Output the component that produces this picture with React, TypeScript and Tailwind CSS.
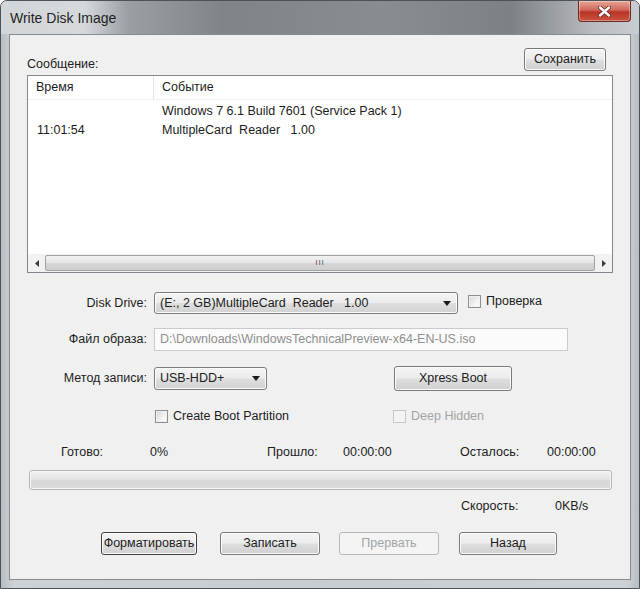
import React from 'react';
import clsx from 'clsx';

type BtnProps = {
  children: React.ReactNode;
  className?: string;
  disabled?: boolean;
  focused?: boolean;
};

const Button = ({ children, className, disabled = false, focused = false }: BtnProps) => (
  <button
    type="button"
    className={clsx(
      'h-[23px] shrink-0 whitespace-nowrap rounded-[3px] border text-[12.5px] leading-none',
      disabled
        ? 'border-[#b5b8ba] bg-[#f4f4f4] text-[#a3a3a3]'
        : 'bg-[linear-gradient(to_bottom,#f4f4f4_0%,#ececec_48%,#dedede_52%,#d0d0d0_100%)] text-[#1c1c1c] shadow-[inset_0_0_0_1px_#fbfbfb]',
      !disabled && (focused ? 'border-[#3f3f3f]' : 'border-[#7a7a7a]'),
      className
    )}
  >
    {children}
  </button>
);

const Arrow = () => (
  <svg width="8" height="5" viewBox="0 0 8 5" className="shrink-0">
    <path d="M0 0 H8 L4 5 Z" fill="#1a1a1a" />
  </svg>
);

const Combo = ({ value, className }: { value: string; className?: string }) => (
  <div
    className={clsx(
      'flex items-center rounded-[3px] border border-[#7b7b7b] bg-[linear-gradient(to_bottom,#f4f4f4_0%,#ececec_48%,#dedede_52%,#d2d2d2_100%)] pl-[5px] pr-[6px] shadow-[inset_0_0_0_1px_#fbfbfb]',
      className
    )}
  >
    <span className="flex-1 whitespace-pre text-[12.5px] text-[#1c1c1c]">{value}</span>
    <Arrow />
  </div>
);

const Check = ({ label, disabled = false, className }: { label: string; disabled?: boolean; className?: string }) => (
  <label className={clsx('flex items-center gap-[5px]', className)}>
    <span
      className={clsx(
        'h-[13px] w-[13px] shrink-0 border',
        disabled
          ? 'border-[#c6c6c6] bg-[#f4f4f4]'
          : 'border-[#8e8f8f] bg-[linear-gradient(135deg,#d6d6d6_0%,#f7f7f7_70%,#ffffff_100%)] shadow-[inset_0_0_0_1px_#f0f0f0]'
      )}
    />
    <span className={clsx('text-[12.5px]', disabled ? 'text-[#a3a3a3]' : 'text-[#1c1c1c]')}>{label}</span>
  </label>
);

const ScrollArrow = ({ dir }: { dir: 'left' | 'right' }) => (
  <div className="flex w-[17px] shrink-0 items-center justify-center">
    <svg width="4" height="7" viewBox="0 0 4 7">
      <path d={dir === 'left' ? 'M4 0 V7 L0 3.5 Z' : 'M0 0 V7 L4 3.5 Z'} fill="#3a3a3a" />
    </svg>
  </div>
);

export default function App() {
  return (
    <div className="h-[589px] w-[640px] bg-white font-['Liberation_Sans',Arial,sans-serif] text-[#1c1c1c]">
      <div className="flex h-full w-full flex-col rounded-t-[7px] border border-[#4d5257] bg-[linear-gradient(to_right,#b9bdc1_0%,#cfd2d5_2%,#c9cdd1_50%,#cfd2d5_98%,#b9bdc1_100%)]">
        {/* Title bar */}
        <div className="flex h-[33px] shrink-0 items-start rounded-t-[6px] bg-[linear-gradient(to_right,#d3d6d9_0%,#d6d9dc_13%,#9a9fa4_20%,#7f8489_35%,#888d92_60%,#7c8186_80%,#b9bcc0_93%,#c9ccd0_100%)]">
          <span className="ml-[9px] mt-[8px] text-[14px] leading-[18px] text-[#1f1f1f]">Write Disk Image</span>
          <div className="ml-auto mr-[8px] flex h-[21px] w-[53px] items-center justify-center rounded-b-[4px] border border-t-0 border-[#6b2a24] bg-[linear-gradient(to_bottom,#e6a596_0%,#d2685a_45%,#b83526_55%,#c9533f_100%)] shadow-[inset_0_0_0_1px_rgba(255,255,255,0.35)]">
            <svg width="13" height="11" viewBox="0 0 13 11">
              <path d="M2 1.5 L11 9.5 M11 1.5 L2 9.5" stroke="#5a2a25" strokeWidth="4" strokeLinecap="round" />
              <path d="M2 1.5 L11 9.5 M11 1.5 L2 9.5" stroke="#ffffff" strokeWidth="2.4" strokeLinecap="round" />
            </svg>
          </div>
        </div>

        {/* Client area */}
        <div className="mx-[8px] mb-[8px] flex flex-1 flex-col border border-[#858a8f] bg-[#f0f0f0]">
          <div className="mt-[14px] flex h-[22px] items-end pl-[17px] pr-[24px]">
            <span className="-mb-[3px] text-[12.5px]">Сообщение:</span>
            <Button className="ml-auto h-[22px] w-[82px]">Сохранить</Button>
          </div>

          {/* List view */}
          <div className="ml-[17px] mt-[4px] flex h-[198px] w-[586px] flex-col border border-[#828790] bg-white">
            <div className="flex h-[24px] shrink-0 items-center border-b border-[#eef0f3] text-[12.5px]">
              <span className="w-[126px] border-r border-[#e3e6ea] pl-[8px] leading-[23px]">Время</span>
              <span className="pl-[8px]">Событие</span>
            </div>
            <div className="mt-[2px] flex-1 text-[12.5px]">
              <div className="flex h-[19px] items-center">
                <span className="w-[126px] pl-[9px]"></span>
                <span className="pl-[8px]">Windows 7 6.1 Build 7601 (Service Pack 1)</span>
              </div>
              <div className="flex h-[19px] items-center">
                <span className="w-[126px] pl-[9px]">11:01:54</span>
                <span className="whitespace-pre pl-[8px]">MultipleCard  Reader   1.00</span>
              </div>
            </div>
            <div className="flex h-[18px] shrink-0 bg-[#f2f2f2]">
              <ScrollArrow dir="left" />
              <div className="my-[1px] flex flex-1 items-center justify-center rounded-[2px] border border-[#9da2a6] bg-[linear-gradient(to_bottom,#f1f1f1_0%,#e6e6e6_50%,#d6d6d6_51%,#cfcfcf_100%)]">
                <span className="text-[8px] leading-none tracking-[1px] text-[#555]">III</span>
              </div>
              <ScrollArrow dir="right" />
            </div>
          </div>

          {/* Disk drive */}
          <div className="mt-[19px] flex h-[22px] items-center">
            <span className="w-[137px] text-right text-[12.5px]">Disk Drive:</span>
            <Combo value="(E:, 2 GB)MultipleCard  Reader   1.00" className="ml-[7px] h-[22px] w-[304px]" />
            <Check label="Проверка" className="ml-[10px] -mt-[4px]" />
          </div>

          {/* Image file */}
          <div className="mt-[14px] flex h-[23px] items-center">
            <span className="w-[137px] text-right text-[12.5px]">Файл образа:</span>
            <div className="ml-[7px] flex h-[23px] w-[414px] items-center border border-[#c9cbce] bg-[#fbfbfb] pl-[5px]">
              <span className="text-[12.5px] text-[#8f8f8f]">D:\Downloads\WindowsTechnicalPreview-x64-EN-US.iso</span>
            </div>
          </div>

          {/* Write method */}
          <div className="mt-[15px] flex h-[24px] items-center">
            <span className="w-[137px] text-right text-[12.5px]">Метод записи:</span>
            <Combo value="USB-HDD+" className="ml-[7px] h-[23px] w-[113px]" />
            <Button className="ml-[127px] h-[25px] w-[118px]">Xpress Boot</Button>
          </div>

          {/* Boot options */}
          <div className="mt-[19px] flex h-[14px] items-center">
            <Check label="Create Boot Partition" className="ml-[145px]" />
            <Check label="Deep Hidden" disabled className="ml-[104px]" />
          </div>

          {/* Status */}
          <div className="mt-[21px] flex h-[16px] items-center pl-[51px] text-[12.5px]">
            <span className="w-[89px]">Готово:</span>
            <span className="w-[117px]">0%</span>
            <span className="w-[76px]">Прошло:</span>
            <span className="w-[117px]">00:00:00</span>
            <span className="w-[87px]">Осталось:</span>
            <span>00:00:00</span>
          </div>

          <div className="ml-[19px] mt-[10px] h-[20px] w-[583px] rounded-[3px] border border-[#b3b5b7] bg-[linear-gradient(to_bottom,#f3f3f3_0%,#e4e4e4_45%,#d6d6d6_55%,#dcdcdc_100%)] shadow-[inset_0_0_0_1px_#f7f7f7]" />

          <div className="mt-[8px] flex h-[16px] items-center pl-[451px] text-[12.5px]">
            <span className="w-[94px]">Скорость:</span>
            <span>0KB/s</span>
          </div>

          {/* Action buttons */}
          <div className="mt-[18px] flex pl-[91px]">
            <Button focused className="w-[96px]">Форматировать</Button>
            <Button className="ml-[23px] w-[100px]">Записать</Button>
            <Button disabled className="ml-[19px] w-[100px]">Прервать</Button>
            <Button className="ml-[20px] w-[98px]">Назад</Button>
          </div>
        </div>
      </div>
    </div>
  );
}
